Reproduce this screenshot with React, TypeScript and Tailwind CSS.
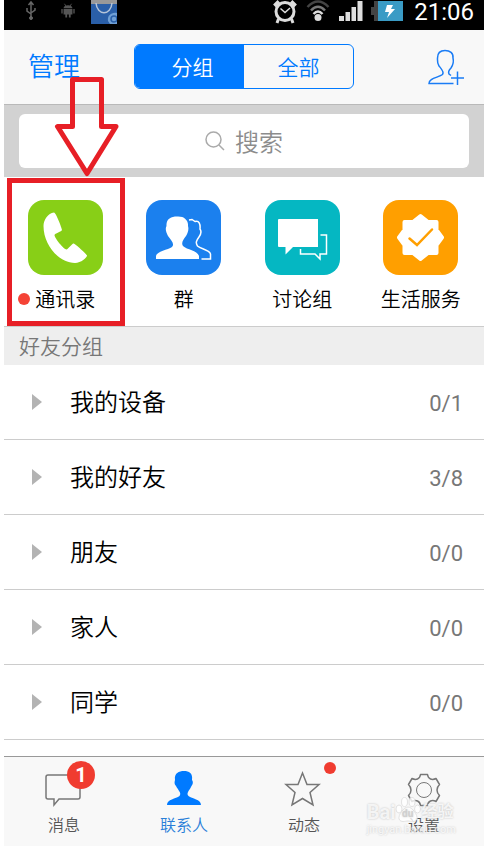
import React from 'react';

const shortcuts = [
  { label: '通讯录', icon: <PhoneTile />, dot: true },
  { label: '群', icon: <GroupTile />, dot: false },
  { label: '讨论组', icon: <ChatTile />, dot: false },
  { label: '生活服务', icon: <ServiceTile />, dot: false },
];

const groups = [
  { name: '我的设备', count: '0/1' },
  { name: '我的好友', count: '3/8' },
  { name: '朋友', count: '0/0' },
  { name: '家人', count: '0/0' },
  { name: '同学', count: '0/0' },
];

function PhoneTile() {
  return (
    <svg viewBox="0 0 75 75" className="size-[75px]" aria-hidden="true">
      <rect width="75" height="75" rx="16" fill="#88cf17" />
      <path
        d="M26 12.5C20 13 15.500 20 15.500 26C15.500 45 31 63 47 63C53 63 59 57.500 59 55.500C59 54.500 47 43.500 45.500 43.500C44 43.500 40 49.500 38.500 49.500C36 49.500 26.500 38 26.500 35C26.500 33.500 34 31.500 34 30C34 28.500 28 12.500 26 12.500Z"
        fill="#fff"
      />
    </svg>
  );
}

function GroupTile() {
  return (
    <svg viewBox="0 0 75 75" className="size-[75px]" aria-hidden="true">
      <rect width="75" height="75" rx="16" fill="#1b80ee" />
      <path
        d="M10 59V56C11 51 22 50 26 47C29 44 25 40 22 36C20 32 19 29 20.500 26C20 19 25 16.500 31 16.500C38 16 42.500 20 42 26C43 29 42 33 40 36C37 40 35 43 37 46C41 50 51 50 53 56V59Z"
        fill="#fff"
      />
      <path
        d="M43 20L46 19.500L49 21.500C53 20 54.500 24 54 29C56 32 54.500 35 53 37C50 41 49.500 43 51.500 46C55 49 64 50 64.500 54V59H55.500"
        fill="none"
        stroke="#fff"
        strokeWidth="1.5"
      />
    </svg>
  );
}

function ChatTile() {
  return (
    <svg viewBox="0 0 75 75" className="size-[75px]" aria-hidden="true">
      <rect width="75" height="75" rx="16" fill="#05b7c2" />
      <path d="M14 19H53V47H28L20.500 54.500V47H14Q13 47 13 46V20Q13 19 14 19Z" fill="#fff" />
      <path
        d="M55.500 35H61.500V54H55V59L50 54H35.500V49"
        fill="none"
        stroke="#fff"
        strokeWidth="1.5"
      />
    </svg>
  );
}

function ServiceTile() {
  return (
    <svg viewBox="0 0 75 75" className="size-[75px]" aria-hidden="true">
      <rect width="75" height="75" rx="16" fill="#ff9f00" />
      <path
        d="M37.500 16L45 22H53.500V30L59 37.500L53.500 45V53H45L37.500 59L30 53H21.500V45L16 37.500L21.500 30V22H30Z"
        fill="#fff"
        stroke="#fff"
        strokeWidth="4"
        strokeLinejoin="round"
      />
      <path
        d="M26.500 38.500L34 45L49 29.500"
        fill="none"
        stroke="#ff9f00"
        strokeWidth="2.500"
        strokeLinecap="round"
      />
    </svg>
  );
}

function StatusBar() {
  return (
    <div className="flex h-[30px] items-start justify-between bg-black pr-2.5 pl-5 text-white">
      <div className="flex items-start gap-[22px]">
        <svg viewBox="0 0 14 24" className="h-6 w-3.5" fill="none" stroke="#666" aria-hidden="true">
          <path d="M7 2V18M3 8V11L7 14M11 8V10L7 13M4.500 5L7 2L9.500 5" strokeWidth="1.500" />
          <circle cx="7" cy="18" r="1.500" fill="#666" />
        </svg>
        <svg viewBox="0 0 18 20" className="h-5 w-4" fill="#555" aria-hidden="true">
          <path d="M4 8C4 3.500 14 3.500 14 8ZM4 9H14V15H12V18.500H10V15H8V18.500H6V15H4ZM1.500 9H3V14H1.500ZM15 9H16.500V14H15Z" />
          <path d="M5 3L7 6M13 3L11 6" stroke="#555" />
        </svg>
        <svg viewBox="0 0 26 24" className="-ml-[7px] h-6 w-[26px]" aria-hidden="true">
          <rect width="26" height="24" fill="#2a5fa8" />
          <rect width="26" height="4" fill="#999" />
          <path d="M5 3C6 16 20 16 21 3" fill="none" stroke="#b5c4d8" strokeWidth="1.500" />
          <path d="M26 13C20 12 16 16 17 21L19 24H26Z" fill="#6f9fd4" />
          <circle cx="23" cy="19" r="3" fill="none" stroke="#2a5fa8" strokeWidth="1.500" />
        </svg>
      </div>
      <div className="flex items-start">
        <svg viewBox="0 0 24 24" className="h-6 w-6" fill="none" stroke="#ddd" aria-hidden="true">
          <circle cx="12" cy="11.500" r="9" strokeWidth="3" />
          <path d="M1.500 6L6 1.500M22.500 6L18 1.500" strokeWidth="4" />
          <path d="M5.500 19L4 23M18.500 19L20 23" strokeWidth="3" />
          <path d="M7.500 8.500L12 12.500L17 8" strokeWidth="1.500" />
        </svg>
        <svg viewBox="0 0 24 24" className="ml-[9px] h-6 w-6" fill="none" aria-hidden="true">
          <path d="M1.500 7Q12 -4 22.500 7" stroke="#444" strokeWidth="2.500" />
          <path d="M5 10.500Q12 3 19 10.500" stroke="#777" strokeWidth="2.500" />
          <path d="M7.500 14Q12 9 16.500 14" stroke="#ddd" strokeWidth="2.500" />
          <circle cx="12" cy="17.500" r="3.500" fill="#ddd" />
        </svg>
        <svg viewBox="0 0 24 22" className="ml-[9px] h-[22px] w-6" fill="#ddd" aria-hidden="true">
          <path d="M0 16H5V21H0ZM6.500 12H11V21H6.500ZM12.500 7H17V21H12.500ZM18.500 1H23.500V21H18.500Z" />
        </svg>
        <svg viewBox="0 0 32 22" className="ml-2 h-[22px] w-8" aria-hidden="true">
          <path d="M0 7H3V1H8V21H3V15H0Z" fill="#444" />
          <rect x="7" y="1" width="25" height="20" fill="#3a9bc5" />
          <path d="M16 5H22L20 9H24L16 18L18 12H14Z" fill="#fff" />
        </svg>
        <time className="ml-[11px] text-2xl leading-6 font-normal">21:06</time>
      </div>
    </div>
  );
}

function Header() {
  return (
    <header className="grid grid-cols-[1fr_220px_1fr] items-center border-b border-[#b9b9b9] bg-[#f8f8f8] pt-3.5 pb-[15px]">
      <button className="justify-self-start pt-0.5 pl-6 text-[26px] leading-[43px] text-[#007aff]">
        管理
      </button>
      <div className="flex h-[45px] overflow-hidden rounded-md border border-[#007aff] text-[21px]">
        <button className="w-1/2 bg-[#007aff] pt-1 pl-1.5 text-white">分组</button>
        <button className="w-1/2 pt-1 text-[#007aff]">全部</button>
      </div>
      <button aria-label="添加好友" className="justify-self-end pr-[19px]">
        <svg
          viewBox="0 0 38 38"
          className="size-[38px]"
          fill="none"
          stroke="#1a7cf5"
          strokeWidth="1.500"
          aria-hidden="true"
        >
          <path d="M26.500 35.500H2C1.500 30 12 29.500 15.500 26.500C17.500 24 14.500 21 12 18C10 15 10.500 13 10.500 10C10.500 4 14 2.500 18 2.500C23 2.500 26.500 5 26 10C27 14 26 17 24 20C22 22 21 24 22 26L24 27.500" />
          <path d="M24 30H37M30.500 23.500V37" />
        </svg>
      </button>
    </header>
  );
}

function SearchBar() {
  return (
    <div className="bg-[#d2d2d2] px-[15px] py-[9px]">
      <label className="flex h-[54px] items-center justify-center gap-2.5 rounded-md bg-white">
        <svg viewBox="0 0 20 20" className="size-5" fill="none" stroke="#aaa" aria-hidden="true">
          <circle cx="8.500" cy="8.500" r="7.500" strokeWidth="1.500" />
          <path d="M14 14L19 19" strokeWidth="1.500" />
        </svg>
        <input
          type="text"
          aria-label="搜索"
          placeholder="搜索"
          className="h-10 w-12 pt-1 text-2xl outline-none placeholder:text-[#8c8c8c]"
        />
      </label>
    </div>
  );
}

function TabBar() {
  const tab = 'flex flex-1 flex-col items-center gap-px pt-2.5 text-base leading-6';

  return (
    <nav className="flex h-[90px] border-t border-[#999] bg-[#f8f8f8] text-[#555]">
      <button className={tab}>
        <span className="relative">
          <svg viewBox="0 0 44 46" className="h-[46px] w-11" fill="none" stroke="#777" aria-hidden="true">
            <path
              d="M6 8H36Q38 8 38 10V30Q38 32 36 32H17L12 38V32H6Q4 32 4 30V10Q4 8 6 8Z"
              strokeWidth="1.500"
            />
          </svg>
          <span className="absolute -top-1.5 left-[25px] size-7 rounded-full bg-[#f03c30] text-center text-xl leading-7 font-bold text-white">
            1
          </span>
        </span>
        消息
      </button>
      <button className={`${tab} text-[#2a7fd8]`} aria-current="page">
        <svg viewBox="0 0 44 46" className="h-[46px] w-11" fill="#007aff" aria-hidden="true">
          <path d="M5 38C5 32 14 32 17.500 29C20 26 16 23 14 19C12 17 12.500 15 13 13C12 6 17 4 22 4C27 4 31 6 30 13C32 16 30 18 29 20C27 24 24 26 26.500 29C30 32 39 32 39 38Z" />
        </svg>
        联系人
      </button>
      <button className={tab}>
        <span className="relative">
          <svg viewBox="0 0 44 46" className="h-[46px] w-11" fill="none" stroke="#777" aria-hidden="true">
            <path
              d="M20.500 6L25 17.500H37L28 25.500L31 38L20.500 31.500L10 38L13 25.500L4 17.500H16Z"
              strokeWidth="1.500"
            />
          </svg>
          <span className="absolute -top-[5px] left-[42px] size-3 rounded-full bg-[#f03c30]" />
        </span>
        动态
      </button>
      <button className={tab}>
        <svg viewBox="0 0 44 46" className="h-[46px] w-11" fill="none" stroke="#777" aria-hidden="true">
          <path
            d="M18.500 7.500H25.500Q26 11 28.500 12Q31 13 34 11.500L37.500 17.500Q35 20 35 23Q35 26 37.500 28.500L34 34.500Q31 33 28.500 34Q26 35 25.500 38.500H18.500Q18 35 15.500 34Q13 33 10 34.500L6.500 28.500Q9 26 9 23Q9 20 6.500 17.500L10 11.500Q13 13 15.500 12Q18 11 18.500 7.500Z"
            strokeWidth="1.500"
            strokeLinejoin="round"
          />
          <circle cx="22" cy="23" r="7.500" />
        </svg>
        设置
      </button>
    </nav>
  );
}

// Red box and arrow pointing at the contacts shortcut
function Annotation() {
  return (
    <svg
      viewBox="0 0 120 250"
      className="pointer-events-none absolute top-[77px] left-0.5 h-[250px] w-[120px]"
      fill="none"
      stroke="#e71f26"
      strokeWidth="5"
      aria-hidden="true"
    >
      <path d="M66.500 2.500H95.500V49.500H110L81 96.500L51.500 49.500H66.500Z" strokeLinejoin="round" />
      <rect x="3.500" y="103.500" width="113" height="143" />
    </svg>
  );
}

function Watermark() {
  return (
    <div className="pointer-events-none absolute right-7 bottom-2.5 text-white/80 [text-shadow:0_0_2px_#bbb]">
      <div className="flex h-7 items-end text-xl leading-6 font-bold">
        Bai
        <svg
          viewBox="0 0 26 28"
          className="h-7 w-[26px]"
          fill="#fff"
          fillOpacity="0.8"
          stroke="#e2e2e2"
          strokeWidth="1"
          aria-hidden="true"
        >
          <ellipse cx="4" cy="13" rx="3" ry="4" />
          <ellipse cx="9.500" cy="6" rx="3" ry="4.500" />
          <ellipse cx="17" cy="6" rx="3" ry="4.500" />
          <ellipse cx="22.500" cy="13" rx="3" ry="4" />
          <path d="M13 11C17 11 23 19 22 23C20 27 16 25 13 25C10 25 6 27 4 23C3 19 9 11 13 11Z" />
          <text x="7" y="21" fontSize="10" fill="#ccc" stroke="none">
            du
          </text>
        </svg>
        <span className="text-base leading-6">经验</span>
      </div>
      <div className="text-[11px] leading-3 font-normal">jingyan.baidu.com</div>
    </div>
  );
}

const App: React.FC = () => {
  return (
    <div className="bg-white pr-[5px] pl-1 font-[Roboto,'Noto_Sans_CJK_SC',sans-serif] font-[350] text-black">
      <div className="relative">
        <StatusBar />
        <Header />
        <SearchBar />

        <div className="grid grid-cols-4 border-b border-[#ccc] pt-[23px] pr-1 pb-3 pl-0.5">
          {shortcuts.map((item) => (
            <button key={item.label} className="flex flex-col items-center gap-[11px]">
              {item.icon}
              <span className="relative text-xl leading-7">
                {item.dot && (
                  <span className="absolute top-[7px] -left-[17px] size-3 rounded-full bg-[#f44336]" />
                )}
                {item.label}
              </span>
            </button>
          ))}
        </div>

        <h2 className="bg-[#eee] pt-0.5 pl-[15px] text-[21px] leading-9 text-[#777]">好友分组</h2>
        <ul className="pb-4">
          {groups.map((group) => (
            <li key={group.name} className="border-b border-[#ccc]">
              <button className="flex h-[74px] w-full items-center pr-[21px] pl-7 text-left">
                <svg viewBox="0 0 10 16" className="h-4 w-2.5" fill="#b3b3b3" aria-hidden="true">
                  <path d="M0 0L10 8L0 16Z" />
                </svg>
                <span className="flex-1 pt-0.5 pl-7 text-2xl">{group.name}</span>
                <span className="pt-0.5 text-[22px] font-normal text-[#777]">{group.count}</span>
              </button>
            </li>
          ))}
        </ul>

        <TabBar />
        <Annotation />
        <Watermark />
      </div>
    </div>
  );
};

export default App;
